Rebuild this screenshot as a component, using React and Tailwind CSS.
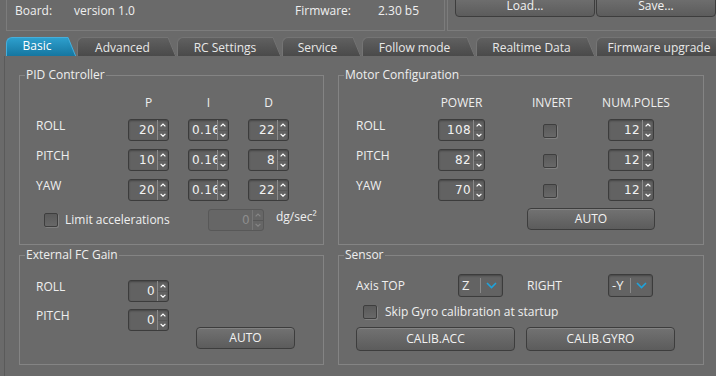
import React from 'react';

function Btn({ children, className = '' }) {
  return (
    <button
      type="button"
      className={`flex items-center justify-center rounded-[4px] border border-[#3d3d3d] bg-gradient-to-b from-[#727272] to-[#5c5c5c] text-[12px] text-[#f2f2f2] shadow-[inset_0_1px_0_rgba(255,255,255,0.12)] ${className}`}
    >
      {children}
    </button>
  );
}

function Check() {
  return (
    <div className="h-[14px] w-[14px] shrink-0 rounded-[2px] border border-[#3e3e3e] bg-gradient-to-b from-[#5a5a5a] to-[#686868] shadow-[1px_1px_0_rgba(255,255,255,0.15)]" />
  );
}

function Spinner({ value, className = '', disabled = false, clip = false }) {
  const arrow = disabled ? '#858585' : '#ffffff';
  return (
    <div
      className={`flex h-[22px] shrink-0 overflow-hidden rounded-[3px] border ${
        disabled
          ? 'border-[#585858] bg-[#666666]'
          : 'border-[#3c3c3c] bg-[#626262] shadow-[inset_0_1px_2px_rgba(0,0,0,0.3)]'
      } ${className}`}
    >
      <div
        className={`flex min-w-0 flex-1 items-center overflow-hidden whitespace-nowrap font-['DejaVu_Sans',sans-serif] text-[12px] tracking-[0.4px] ${
          clip ? 'justify-start pl-[3px]' : 'justify-end pr-[2px]'
        } ${disabled ? 'text-[#8e8e8e]' : 'text-[#f2f2f2]'}`}
      >
        {value}
      </div>
      <div className={`flex w-[11px] shrink-0 flex-col border-l ${disabled ? 'border-[#777777]' : 'border-[#8a8a8a]'}`}>
        <div className="flex flex-1 items-center justify-center border-b border-[#575757]">
          <svg width="6" height="4" viewBox="0 0 6 4">
            <polyline points="0.6,3.4 3,1 5.4,3.4" fill="none" stroke={arrow} strokeWidth="1.2" />
          </svg>
        </div>
        <div className="flex flex-1 items-center justify-center">
          <svg width="6" height="4" viewBox="0 0 6 4">
            <polyline points="0.6,0.8 3,3.2 5.4,0.8" fill="none" stroke={arrow} strokeWidth="1.2" />
          </svg>
        </div>
      </div>
    </div>
  );
}

function Combo({ value, className = '' }) {
  return (
    <div
      className={`flex h-[23px] shrink-0 items-center rounded-[3px] border border-[#3c3c3c] bg-[#636363] shadow-[inset_0_1px_2px_rgba(0,0,0,0.3)] ${className}`}
    >
      <span className="w-[21px] pl-[3px] text-[13px]">{value}</span>
      <span className="h-[15px] w-px bg-[#8a8a8a]" />
      <span className="flex flex-1 justify-center">
        <svg width="11" height="7" viewBox="0 0 11 7">
          <polyline points="1,1 5.5,5.5 10,1" fill="none" stroke="#1ea3dc" strokeWidth="1.6" />
        </svg>
      </span>
    </div>
  );
}

function Tab({ label, body, active = false }) {
  const fillId = active ? 'tab-blue' : 'tab-gray';
  return (
    <div className="flex h-[19px] shrink-0">
      <div
        className={`flex items-center justify-center rounded-tl-[6px] border-l border-t ${
          active
            ? 'border-[#46aedb] bg-gradient-to-b from-[#2d9fcd] to-[#1576a0] pb-[3px] text-white'
            : 'border-[#747474] bg-gradient-to-b from-[#606060] to-[#4a4a4a] pt-[1px] text-[#e8e8e8]'
        } ${body}`}
      >
        {label}
      </div>
      <svg width="9" height="19" viewBox="0 0 9 19" className="shrink-0">
        <defs>
          <linearGradient id={fillId} x1="0" y1="0" x2="0" y2="1">
            <stop offset="0" stopColor={active ? '#2d9fcd' : '#606060'} />
            <stop offset="1" stopColor={active ? '#1576a0' : '#4a4a4a'} />
          </linearGradient>
        </defs>
        <path d="M0 0 L1 0 L9 19 L0 19 Z" fill={`url(#${fillId})`} />
        <path d="M0 0.5 L1 0.5 L8.6 19" fill="none" stroke={active ? '#46aedb' : '#747474'} strokeWidth="1" />
      </svg>
    </div>
  );
}

function Group({ title, className = '', children }) {
  return (
    <div className={`flex flex-col border border-[#848484] ${className}`}>
      <span className="-mt-[9px] ml-[5px] self-start bg-[#6a6a6a] px-[1px] leading-[16px]">{title}</span>
      {children}
    </div>
  );
}

const pid = [
  ['ROLL', '20', '22'],
  ['PITCH', '10', '8'],
  ['YAW', '20', '22'],
];

const motors = [
  ['ROLL', '108'],
  ['PITCH', '82'],
  ['YAW', '70'],
];

export default function App() {
  return (
    <div className="h-[376px] w-[716px] overflow-hidden bg-[#6a6a6a] font-['Open_Sans',sans-serif] text-[12px] text-[#efefef]">
      {/* Board info + load/save */}
      <div className="flex h-[31px]">
        <div className="ml-[6px] flex w-[448px] border-b border-l border-r border-[#7c7c7c] pl-[8px] leading-[21px]">
          <span className="w-[59px]">Board:</span>
          <span className="w-[221px]">version 1.0</span>
          <span className="w-[83px]">Firmware:</span>
          <span>2.30 b5</span>
        </div>
        <div className="ml-[2px] flex flex-1 border-b border-l border-[#7c7c7c] pl-[7px]">
          <div className="-mt-[5px] flex h-[22px] gap-[1px]">
            <Btn className="h-[22px] w-[140px]">Load...</Btn>
            <Btn className="h-[22px] w-[120px]">Save...</Btn>
          </div>
        </div>
      </div>

      {/* Tabs */}
      <div className="mt-[6px] flex gap-[1px] pl-[6px]">
        <Tab label="Basic" body="w-[61px]" active />
        <Tab label="Advanced" body="w-[90px]" />
        <Tab label="RC Settings" body="w-[95px]" />
        <Tab label="Service" body="w-[70px]" />
        <Tab label="Follow mode" body="w-[104px]" />
        <Tab label="Realtime Data" body="w-[110px]" />
        <Tab label="Firmware upgrade" body="w-[125px]" />
      </div>

      {/* Content */}
      <div className="ml-[4px] flex h-[320px] gap-[14px] border-l border-[#5a5a5a] pl-[14px] pt-[19px]">
        <div className="flex flex-col gap-[10px]">
          <Group title="PID Controller" className="h-[170px] w-[305px]">
            <div className="mt-[12px] flex h-[16px] gap-[19px] pl-[108px] leading-[16px]">
              <span className="w-[41px] text-center">P</span>
              <span className="w-[41px] text-center">I</span>
              <span className="w-[41px] text-center">D</span>
            </div>
            <div className="mt-[8px] flex flex-col gap-[8px]">
              {pid.map(([name, p, d]) => (
                <div key={name} className="flex h-[22px] pl-[16px]">
                  <span className="w-[92px] leading-[13px]">{name}</span>
                  <div className="flex gap-[19px]">
                    <Spinner value={p} className="w-[41px]" />
                    <Spinner value="0.16" className="w-[41px]" clip />
                    <Spinner value={d} className="w-[41px]" />
                  </div>
                </div>
              ))}
            </div>
            <div className="mt-[8px] flex h-[22px] items-center pl-[24px]">
              <Check />
              <span className="ml-[7px] w-[143px]">Limit accelerations</span>
              <Spinner value="0" className="w-[56px]" disabled />
              <span className="-mt-[6px] ml-[12px]">dg/sec²</span>
            </div>
          </Group>

          <Group title="External FC Gain" className="h-[110px] w-[305px]">
            <div className="mt-[17px] flex">
              <div className="flex flex-col gap-[7px] pl-[16px]">
                <div className="flex h-[22px]">
                  <span className="w-[92px] leading-[13px]">ROLL</span>
                  <Spinner value="0" className="w-[41px]" />
                </div>
                <div className="flex h-[22px]">
                  <span className="w-[92px] leading-[13px]">PITCH</span>
                  <Spinner value="0" className="w-[41px]" />
                </div>
              </div>
              <Btn className="ml-[27px] mt-[47px] h-[22px] w-[99px]">AUTO</Btn>
            </div>
          </Group>
        </div>

        <div className="flex flex-col gap-[10px]">
          <Group title="Motor Configuration" className="h-[170px] w-[366px]">
            <div className="mt-[12px] flex h-[16px] leading-[16px]">
              <span className="ml-[99px] w-[47px] text-center">POWER</span>
              <span className="ml-[35px] w-[64px] text-center">INVERT</span>
              <span className="ml-[12px] w-[80px] text-center">NUM.POLES</span>
            </div>
            <div className="mt-[8px] flex flex-col gap-[8px]">
              {motors.map(([name, power]) => (
                <div key={name} className="flex h-[22px] pl-[17px]">
                  <span className="w-[82px] leading-[13px]">{name}</span>
                  <Spinner value={power} className="w-[47px]" />
                  <div className="ml-[58px] mt-[5px]">
                    <Check />
                  </div>
                  <Spinner value="12" className="ml-[51px] w-[46px]" />
                </div>
              ))}
            </div>
            <Btn className="ml-[188px] mt-[7px] h-[22px] w-[128px]">AUTO</Btn>
          </Group>

          <Group title="Sensor" className="h-[110px] w-[366px]">
            <div className="mt-[11px] flex h-[23px] items-center pl-[17px]">
              <span className="w-[102px]">Axis TOP</span>
              <Combo value="Z" className="w-[45px]" />
              <span className="ml-[24px] w-[81px]">RIGHT</span>
              <Combo value="-Y" className="w-[45px]" />
            </div>
            <div className="mt-[8px] flex h-[14px] items-center pl-[24px]">
              <Check />
              <span className="ml-[8px]">Skip Gyro calibration at startup</span>
            </div>
            <div className="mt-[8px] flex pl-[17px]">
              <Btn className="h-[24px] w-[159px]">CALIB.ACC</Btn>
              <Btn className="ml-[11px] h-[24px] w-[149px]">CALIB.GYRO</Btn>
            </div>
          </Group>
        </div>
      </div>
    </div>
  );
}
